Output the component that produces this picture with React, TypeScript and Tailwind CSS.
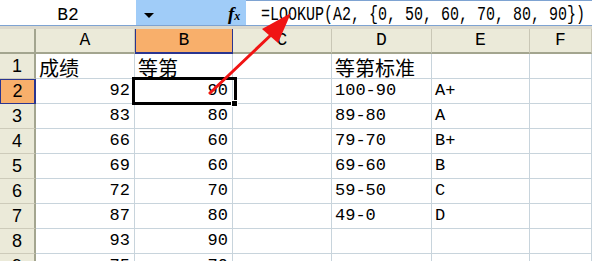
import React from "react";

const mono = "font-['Liberation_Mono',monospace]";
const cjk = "font-['Noto_Sans_CJK_SC','Noto_Sans',sans-serif]";

type Cell = { v: string; align?: "l" | "r"; cjk?: boolean };

const rows: Cell[][] = [
  [{ v: "成绩", cjk: true }, { v: "等第", cjk: true }, { v: "" }, { v: "等第标准", cjk: true }, { v: "" }, { v: "" }],
  [{ v: "92", align: "r" }, { v: "90", align: "r" }, { v: "" }, { v: "100-90" }, { v: "A+" }, { v: "" }],
  [{ v: "83", align: "r" }, { v: "80", align: "r" }, { v: "" }, { v: "89-80" }, { v: "A" }, { v: "" }],
  [{ v: "66", align: "r" }, { v: "60", align: "r" }, { v: "" }, { v: "79-70" }, { v: "B+" }, { v: "" }],
  [{ v: "69", align: "r" }, { v: "60", align: "r" }, { v: "" }, { v: "69-60" }, { v: "B" }, { v: "" }],
  [{ v: "72", align: "r" }, { v: "70", align: "r" }, { v: "" }, { v: "59-50" }, { v: "C" }, { v: "" }],
  [{ v: "87", align: "r" }, { v: "80", align: "r" }, { v: "" }, { v: "49-0" }, { v: "D" }, { v: "" }],
  [{ v: "93", align: "r" }, { v: "90", align: "r" }, { v: "" }, { v: "" }, { v: "" }, { v: "" }],
  [{ v: "75", align: "r" }, { v: "70", align: "r" }, { v: "" }, { v: "" }, { v: "" }, { v: "" }],
];

const colLetters = ["A", "B", "C", "D", "E", "F"];

export default function App() {
  return (
    <div className="relative w-[592px] h-[261px] overflow-hidden bg-white">
      {/* Formula bar */}
      <div className="flex h-[26px] border-b border-[#7ea3d2] bg-white">
        <div className={`w-[136px] shrink-0 flex items-center justify-center pt-[5px] text-[18px] text-black ${mono}`}>
          B2
        </div>
        <div className="relative w-[110px] shrink-0 bg-[#a0ccf8]">
          <div className="absolute left-[8px] top-[13px] w-0 h-0 border-l-[5px] border-r-[5px] border-t-[5px] border-l-transparent border-r-transparent border-t-black" />
          <div className="absolute left-[92px] top-[4px] font-['Liberation_Serif',serif] italic font-bold text-[19px] leading-none text-black">
            f<span className="text-[12px]">x</span>
          </div>
        </div>
        <div className="flex-1 min-w-0 overflow-hidden flex items-center border-t border-[#7ea3d2] pl-[15px] pt-[4px]">
          <span className={`inline-block shrink-0 origin-left scale-x-[0.75] text-[20px] whitespace-pre text-black ${mono}`}>
            =LOOKUP(A2, {"{"}0, 50, 60, 70, 80, 90{"}"})
          </span>
        </div>
      </div>
      {/* gap */}
      <div className="h-[3px] bg-[#dcd9cd]" />
      {/* Grid */}
      <div className="grid grid-cols-[36px_99px_98px_99px_100px_98px_62px]">
        {/* header row */}
        <div className="h-[25px] bg-[#ebead9] border-r-2 border-b-2 border-r-[#a3a58f] border-b-[#a3a58f]" />
        {colLetters.map((c) =>
          c === "B" ? (
            <div
              key={c}
              className={`h-[25px] bg-[#f8af6b] border-l border-r border-b-2 border-[#2a3590] flex items-center justify-center text-[18px] text-black ${mono}`}
            >
              {c}
            </div>
          ) : (
            <div
              key={c}
              className={`h-[25px] bg-[#ebead9] border-r border-r-[#c9c7b6] border-b-2 border-b-[#a3a58f] flex items-center justify-center text-[18px] text-black ${mono}`}
            >
              {c}
            </div>
          )
        )}
        {rows.map((r, i) => (
          <React.Fragment key={i}>
            {i === 1 ? (
              <div className="h-[25px] bg-[#f8af6b] border-l border-t border-b border-r-2 border-[#2a3590] flex items-center justify-center font-['Liberation_Sans',sans-serif] text-[18px] text-black">
                {i + 1}
              </div>
            ) : (
              <div className="h-[25px] bg-[#ebead9] border-r-2 border-r-[#a3a58f] border-b border-b-[#cdcbba] flex items-center justify-center font-['Liberation_Sans',sans-serif] text-[18px] text-black">
                {i + 1}
              </div>
            )}
            {r.map((c, j) => (
              <div
                key={j}
                className={`relative h-[25px] border-r border-b border-[#c8d4dc] flex items-center ${
                  c.align === "r" ? "justify-end pr-[4px]" : "justify-start pl-[3px]"
                } ${c.cjk ? `${cjk} text-[20px] pt-[3px]` : `${mono} text-[17px]`} text-black whitespace-pre`}
              >
                {c.v}
                {i === 1 && j === 1 && (
                  <>
                    <div className="absolute -left-[3px] -top-[2px] w-[105px] h-[28px] border-[3px] border-black z-10" />
                    <div className="absolute left-[96px] top-[21px] w-[7px] h-[7px] bg-black border border-white z-20" />
                  </>
                )}
              </div>
            ))}
          </React.Fragment>
        ))}
      </div>
      {/* red arrow */}
      <svg className="absolute left-0 top-0 z-30 pointer-events-none" width="592" height="261" viewBox="0 0 592 261">
        <line x1="210" y1="93" x2="272" y2="34" stroke="#f01414" strokeWidth="3" strokeLinecap="round" />
        <polygon points="291,13 262,29 278,43" fill="#f01414" />
      </svg>
    </div>
  );
}
